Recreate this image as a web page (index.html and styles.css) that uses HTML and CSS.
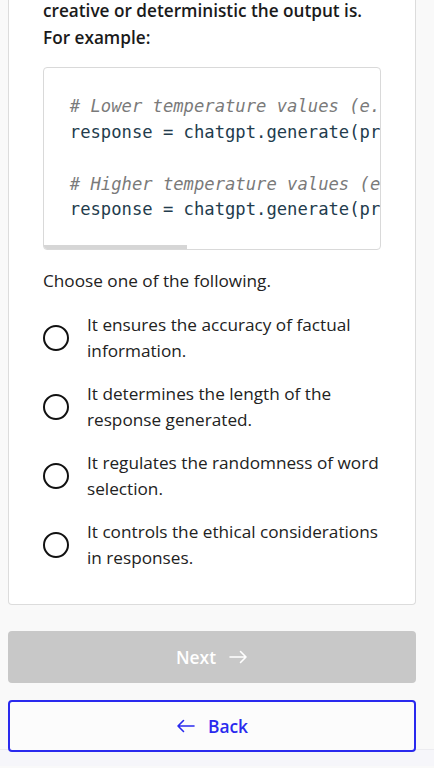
FILE: index.html
```html
<!DOCTYPE html>
<html lang="en">
<head>
<meta charset="utf-8">
<title>Quiz</title>
<link rel="stylesheet" href="styles.css">
</head>
<body>
<div class="page">
  <section class="card">
    <p class="intro">creative or deterministic the output is.<br>For example:</p>
    <div class="code-box">
      <pre class="code"><span class="cm"># Lower temperature values (e.g., 0.2) make the output more focused</span>
response = chatgpt.generate(prompt, temperature=0.2)

<span class="cm"># Higher temperature values (e.g., 0.8) make the output more random</span>
response = chatgpt.generate(prompt, temperature=0.8)</pre>
      <div class="scroll-thumb"></div>
    </div>
    <p class="prompt">Choose one of the following.</p>
    <ul class="options">
      <li class="option"><span class="radio"></span><span class="label">It ensures the accuracy of factual information.</span></li>
      <li class="option"><span class="radio"></span><span class="label">It determines the length of the response generated.</span></li>
      <li class="option"><span class="radio"></span><span class="label">It regulates the randomness of word selection.</span></li>
      <li class="option"><span class="radio"></span><span class="label">It controls the ethical considerations in responses.</span></li>
    </ul>
  </section>
  <div class="actions">
    <button class="btn btn-next" type="button">Next
      <svg class="ico" width="20" height="18" viewBox="0 0 20 18"><path d="M2 9h16M12.5 3.5L18 9l-5.5 5.5" fill="none" stroke="currentColor" stroke-width="1.6" stroke-linecap="round" stroke-linejoin="round"/></svg>
    </button>
    <button class="btn btn-back" type="button">
      <svg class="ico" width="20" height="18" viewBox="0 0 20 18"><path d="M18 9H2M7.5 3.5L2 9l5.5 5.5" fill="none" stroke="currentColor" stroke-width="1.6" stroke-linecap="round" stroke-linejoin="round"/></svg>
      Back</button>
  </div>
</div>
<div class="bottom-strip"></div>
</body>
</html>
```
FILE: styles.css
```css
html, body {
  margin: 0;
  padding: 0;
  background: #f9f9f9;
}
body {
  font-family: "Open Sans", "Liberation Sans", sans-serif;
  color: #222;
  overflow: hidden;
}
.page {
  padding: 0 18px 0 8px;
  height: 752px;
  box-sizing: border-box;
}
.card {
  background: #fff;
  border: 1px solid #dcdcdc;
  border-top: none;
  border-radius: 0 0 4px 4px;
  padding: 0 34px 34px;
}
.intro {
  margin: -3px 0 16px;
  font-size: 17.2px;
  line-height: 27.2px;
  font-weight: 600;
  color: #1a1a1a;
}
.code-box {
  position: relative;
  border: 1px solid #d9d9d9;
  border-radius: 4px;
  overflow: hidden;
  margin-bottom: 18px;
}
.code {
  margin: 0;
  padding: 25.8px;
  font-family: "DejaVu Sans Mono", "Liberation Mono", monospace;
  font-size: 17.2px;
  line-height: 25.8px;
  color: #233c4d;
  white-space: pre;
  overflow: hidden;
}
.cm {
  color: #7a7a7a;
  font-style: italic;
}
.scroll-thumb {
  position: absolute;
  left: 0;
  bottom: 0;
  width: 143px;
  height: 4px;
  background: #d6d6d6;
}
.prompt {
  margin: 0 0 19px;
  font-size: 17.2px;
  line-height: 25.5px;
}
.options {
  list-style: none;
  margin: 0;
  padding: 0;
  display: flex;
  flex-direction: column;
  gap: 18px;
}
.option {
  display: flex;
  align-items: center;
  gap: 18px;
}
.radio {
  flex: none;
  width: 22px;
  height: 22px;
  border: 2px solid #111;
  border-radius: 50%;
}
.label {
  font-size: 17.2px;
  line-height: 25.5px;
}
.actions {
  display: flex;
  flex-direction: column;
  gap: 17px;
  margin-top: 26px;
}
.btn {
  display: flex;
  align-items: center;
  justify-content: center;
  gap: 12px;
  height: 52px;
  border-radius: 4px;
  font-family: "Open Sans", "Liberation Sans", sans-serif;
  font-size: 17.4px;
  font-weight: 600;
  cursor: pointer;
}
.btn-next {
  background: #c8c8c8;
  border: none;
  color: #fff;
}
.btn-back {
  background: #fcfcfc;
  border: 2px solid #2a2aee;
  color: #2a2aee;
}
.ico {
  display: block;
}
.bottom-strip {
  height: 16px;
  background: #f6f6fa;
  border-top: 1px solid #ececf0;
}
```
